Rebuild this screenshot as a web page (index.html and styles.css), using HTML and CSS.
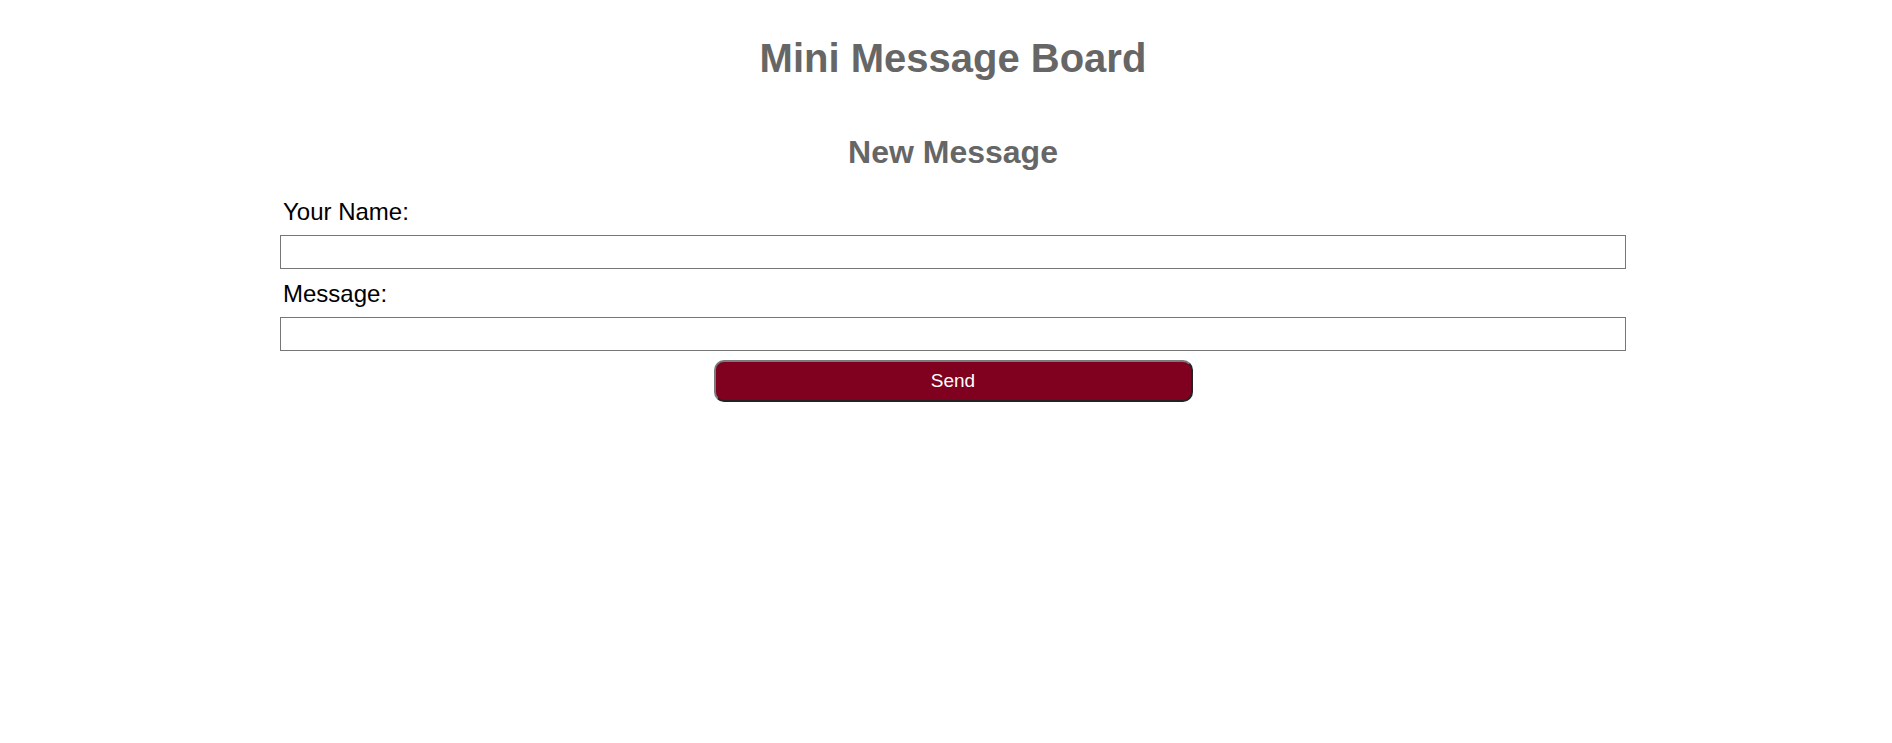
FILE: index.html
```html
<!DOCTYPE html>
<html lang="en">
<head>
<meta charset="utf-8">
<title>Mini Message Board</title>
<link rel="stylesheet" href="styles.css">
</head>
<body>
  <main class="page">
    <h1 class="title">Mini Message Board</h1>
    <h2 class="subtitle">New Message</h2>
    <form class="form">
      <label class="label" for="name">Your Name:</label>
      <input class="input" id="name" type="text">
      <label class="label" for="message">Message:</label>
      <input class="input" id="message" type="text">
      <button class="send" type="button">Send</button>
    </form>
  </main>
</body>
</html>
```

FILE: styles.css
```css
html, body {
  margin: 0;
  background: #ffffff;
}

body {
  padding: 0 0 0 14px;
  font-family: "Liberation Sans", Arial, sans-serif;
}

.page {
  width: 1346px;
  margin: 0 auto;
}

.title {
  margin: 36px 0 0;
  font-size: 40px;
  font-weight: bold;
  color: #666666;
  text-align: center;
}

.subtitle {
  margin: 53px 0 0;
  font-size: 32px;
  font-weight: bold;
  color: #666666;
  text-align: center;
}

.form {
  margin-top: 26px;
  display: flex;
  flex-direction: column;
  gap: 10px;
}

.label {
  font-size: 24px;
  color: #000000;
  padding: 1px 0 0 3px;
  margin-bottom: -1px;
}

.input {
  box-sizing: border-box;
  width: 100%;
  height: 34px;
  margin: 0;
  border: 1px solid #767676;
  border-radius: 0;
  padding: 0 6px;
  font-family: "Liberation Sans", Arial, sans-serif;
  font-size: 16px;
}

.send {
  box-sizing: border-box;
  align-self: center;
  width: 479px;
  height: 42px;
  margin: -1px 0 0;
  background: #800020;
  color: #ffffff;
  border: 2px solid;
  border-color: #7a7a7a #222222 #222222 #7a7a7a;
  border-radius: 10px;
  font-family: "Liberation Sans", Arial, sans-serif;
  font-size: 19px;
  cursor: pointer;
}
```
